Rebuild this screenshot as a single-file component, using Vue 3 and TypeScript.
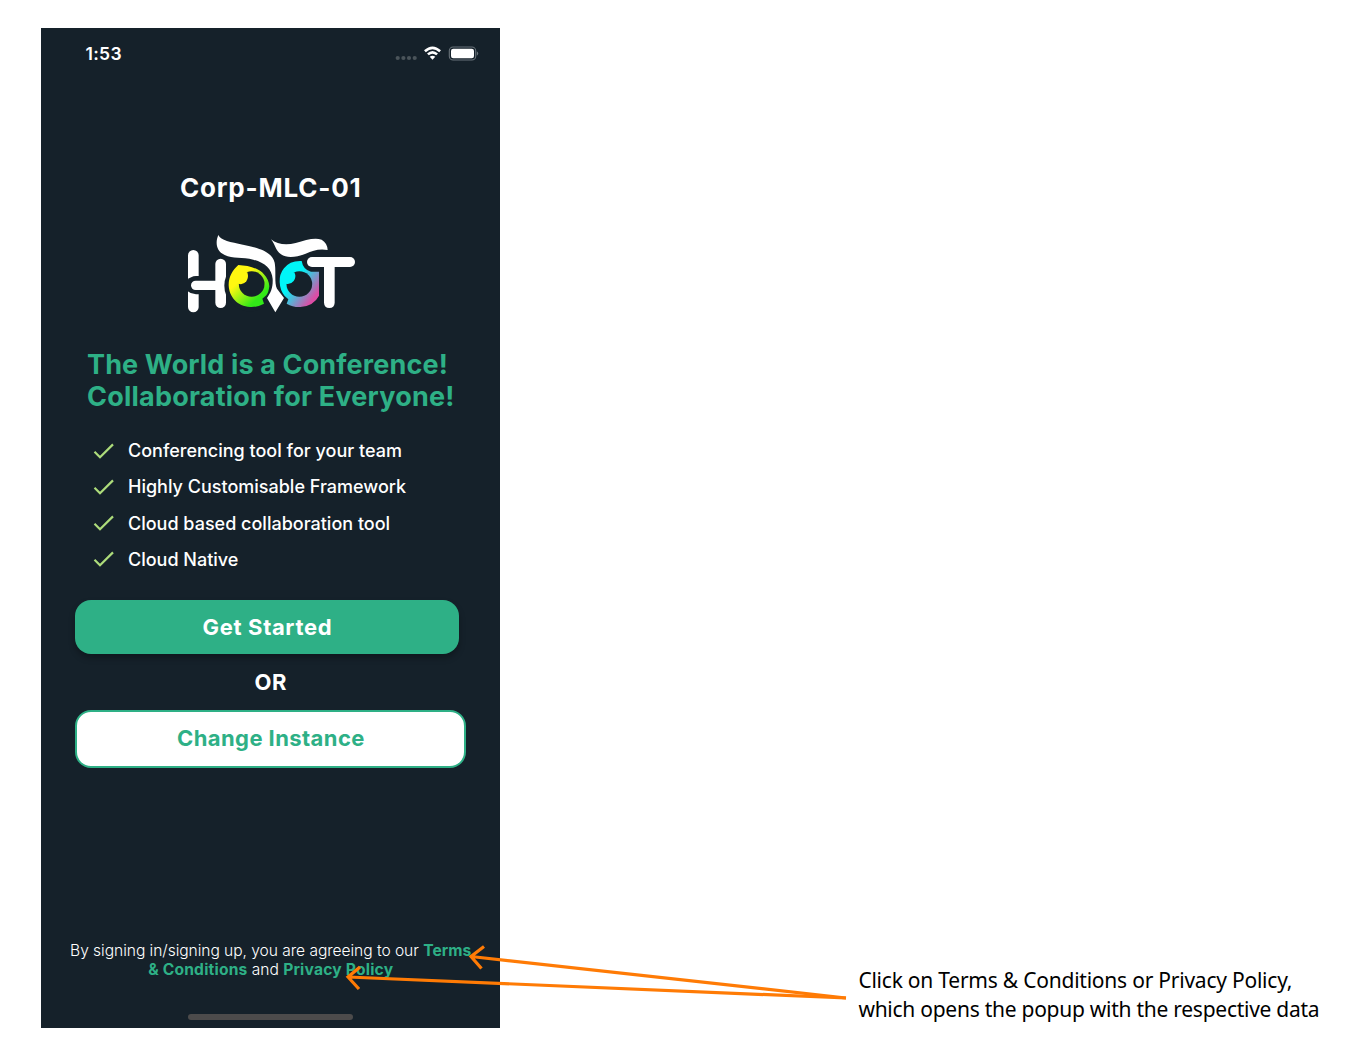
<script setup lang="ts">
const features: string[] = [
  'Conferencing tool for your team',
  'Highly Customisable Framework',
  'Cloud based collaboration tool',
  'Cloud Native',
]
</script>

<template>
  <div class="board">
    <main class="phone">
      <header class="status">
        <span class="time">1:53</span>
        <svg class="indicators" viewBox="0 0 90 20" width="90" height="20">
          <g fill="#4a545a">
            <circle cx="7.7" cy="13" r="2.1" /><circle cx="13.4" cy="13" r="2.1" />
            <circle cx="19" cy="13" r="2.1" /><circle cx="24.7" cy="13" r="2.1" />
          </g>
          <g fill="none" stroke="#fff" stroke-width="2.6">
            <path d="M34.9 6.2Q42.5 -0.6 50.1 6.2" />
            <path d="M37.9 9.4Q42.5 5.2 47.1 9.4" />
          </g>
          <path d="M39.7 11.7Q42.5 9.6 45.3 11.7L42.5 14.7Z" fill="#fff" />
          <rect x="59.3" y="2" width="26.4" height="13" rx="3.8" fill="none" stroke="#69737a" stroke-width="1.1" />
          <rect x="61" y="3.7" width="23" height="9.6" rx="2.3" fill="#fff" />
          <path d="M86.8 6.3Q88.2 7 88.2 8.5T86.8 10.7Z" fill="#69737a" />
        </svg>
      </header>

      <h1 class="instance">Corp-MLC-01</h1>

      <svg class="logo" viewBox="0 0 555 285" width="185" height="95" role="img" aria-label="Hoot">
        <defs>
          <linearGradient id="lime" gradientUnits="userSpaceOnUse" x1="165" y1="140" x2="245" y2="225">
            <stop offset="0.25" stop-color="#fff710" /><stop offset="0.9" stop-color="#32ea18" />
          </linearGradient>
          <linearGradient id="candy" gradientUnits="userSpaceOnUse" x1="315" y1="145" x2="405" y2="215">
            <stop offset="0.3" stop-color="#00f5f7" /><stop offset="1" stop-color="#dc4da5" />
          </linearGradient>
        </defs>
        <g fill="#fff">
          <rect x="24" y="75" width="32" height="187" rx="16" />
          <rect x="106" y="101" width="32" height="148" rx="16" />
        </g>
        <path d="M60 153H48Q32 154 22 165V198Q32 207 48 208H60Z" fill="#15212a" />
        <rect x="33" y="167" width="95" height="28" rx="14" fill="#fff" />
        <circle cx="210" cy="182" r="77" fill="#15212a" />
        <path d="M175 120C205 122 235 128 253 149Q267 164 268 184Q266 202 259 211L247 221L252 236Q232 247 210 246C173 244 147 216 146 180C146 155 158 135 175 120Z" fill="url(#lime)" />
        <circle cx="215" cy="177" r="38.5" fill="#15212a" />
        <path d="M170 136L202 142Q207 158 199 169Q190 181 174 176Z" fill="#fff710" />
        <path d="M365 108Q330 106 312 130Q298 147 299 171Q300 196 314 213L325 223L320 236Q339 247 361 246Q401 243 417 212V140H393Q369 134 365 108Z" fill="url(#candy)" />
        <circle cx="358" cy="177" r="38.5" fill="#15212a" />
        <path d="M312 140L343 142Q350 156 341 168Q333 179 317 176Z" fill="#00f5f7" />
        <path d="M115 30C123 47 151 51 189 59C239 69 275 80 284 113C289 140 282 174 291 191L312 219L286 262L261 219C273 202 279 187 278 162C276 132 254 113 220 104C188 96 158 101 134 90C107 78 106 51 115 30Z" fill="#fff" />
        <path d="M273 43C291 58 318 62 347 54C377 46 402 37 425 44Q442 54 443 75C417 70 399 77 377 86C350 97 321 101 303 88C286 77 286 58 273 43Z" fill="#fff" />
        <rect x="381" y="96" width="144" height="30" rx="15" fill="#fff" />
        <path d="M432 112H464V233Q463 249 448 249T432 233Z" fill="#fff" />
      </svg>

      <h2 class="tagline"><span class="tag-a">The World is a Conference!</span><br><span class="tag-b">Collaboration for Everyone!</span></h2>

      <ul class="features">
        <li v-for="feature in features" :key="feature">
          <svg viewBox="0 0 22 18" width="22" height="18"><path d="M1.5 9.8L7 15.2L20 2.4" fill="none" stroke="#addc7b" stroke-width="2.2" /></svg>
          <span>{{ feature }}</span>
        </li>
      </ul>

      <button class="button start" type="button">Get Started</button>
      <p class="or">OR</p>
      <button class="button change" type="button">Change Instance</button>

      <footer class="legal">
        By signing in/signing up, you are agreeing to our <b>Terms</b><br>
        <span class="legal-end"><b>&amp; Conditions</b> and <b>Privacy Policy</b></span>
      </footer>
      <div class="home-bar"></div>
    </main>

    <p class="note"><span class="note-a">Click on Terms &amp; Conditions or Privacy Policy,</span><br><span class="note-b">which opens the popup with the respective data</span></p>

    <svg class="arrows" viewBox="340 935 520 70" width="520" height="70">
      <g fill="none" stroke="#ff7b05" stroke-width="3.2">
        <path d="M846 998L471 956.5M484 946.5L471 956.5L481.5 968.5" />
        <path d="M846 998L348 977M360 967L348 977L359 989" />
      </g>
    </svg>
  </div>
</template>

<style>
body { background: #fff; }
</style>

<style scoped>
.board {
  position: relative;
  box-sizing: border-box;
  display: flex;
  width: 1348px;
  height: 1062px;
  padding: 28px 0 0 41px;
  background: #fff;
  overflow: hidden;
}
.phone {
  box-sizing: border-box;
  flex: none;
  display: flex;
  flex-direction: column;
  width: 459.4px;
  height: 1000.4px;
  background: #15212a;
  color: #fff;
  font-family: Inter, sans-serif;
}
.status {
  display: flex;
  justify-content: space-between;
  height: 20px;
  padding: 16px 20px 0 44.5px;
}
.indicators { margin-top: 1px; }
.time { font-size: 17.5px; font-weight: 600; line-height: 20px; letter-spacing: 0.3px; }
.instance { margin: 107px 0 0; font-size: 26px; font-weight: 700; line-height: 34px; text-align: center; letter-spacing: 0.8px; }
.logo { margin: 20px 0 0 139px; flex: none; }
.tagline { margin: 29px 0 0 46px; color: #2eb086; font-size: 27px; font-weight: 700; line-height: 32.3px; white-space: nowrap; }
.tag-a { letter-spacing: 0.13px; }
.tag-b { letter-spacing: 0.22px; }
.features { margin: 19px 0 0 52px; padding: 0; list-style: none; }
.features li { display: flex; align-items: center; gap: 13px; height: 36.2px; font-size: 18px; font-weight: 500; white-space: nowrap; }
.button { box-sizing: border-box; margin: 0 0 0 34.4px; padding: 0; border: 0; border-radius: 16px; font: 700 22px/28px Inter, sans-serif; letter-spacing: 0.65px; }
.start { width: 384px; height: 53.5px; margin-top: 23px; background: #2eb086; color: #fff; box-shadow: 0 4px 6px rgba(0, 0, 0, 0.28); }
.or { margin: 14px 0 0; font-size: 22px; font-weight: 700; line-height: 28px; text-align: center; letter-spacing: 0.5px; }
.change { width: 391px; height: 58.5px; margin-top: 14px; padding-bottom: 2px; border: 2px solid #2eb086; background: #fff; color: #2eb086; letter-spacing: 0.42px; }
.legal { margin-top: 173px; font-size: 15.6px; font-weight: 300; line-height: 19px; text-align: center; white-space: nowrap; letter-spacing: -0.05px; }
.legal b { color: #2eb086; font-weight: 700; letter-spacing: 0.05px; }
.legal-end b { letter-spacing: 0.2px; }
.home-bar { width: 165px; height: 6px; margin: 35px 0 0 147px; border-radius: 3px; background: #4c4b4b; }
.note { margin: 938px 0 0 358px; color: #000; font: 21px/29px "Noto Sans", sans-serif; white-space: nowrap; }
.note-a { letter-spacing: -0.23px; }
.note-b { letter-spacing: -0.26px; }
.arrows { position: absolute; left: 340px; top: 935px; }
</style>
